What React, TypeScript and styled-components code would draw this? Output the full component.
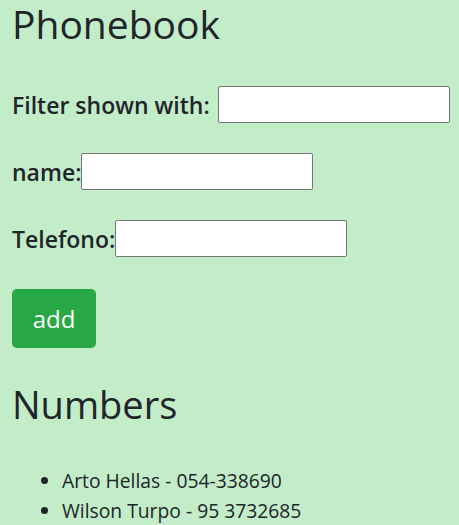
import React from 'react';
import styled, { createGlobalStyle } from 'styled-components';

const GlobalStyle = createGlobalStyle`
  html, body {
    margin: 0;
    padding: 0;
    background: #c3ecc9;
  }
  body {
    font-family: 'Open Sans', 'Noto Sans', sans-serif;
    color: #212529;
  }
`;

const PERSONS = [
  { name: 'Arto Hellas', number: '054-338690' },
  { name: 'Wilson Turpo', number: '95 3732685' },
];

const App: React.FC = () => {
  return (
    <Page>
      <GlobalStyle />
      <Title>Phonebook</Title>
      <Row $top={38}>
        <Label>Filter shown with:</Label>
        <Spacer />
        <Input />
      </Row>
      <Form>
        <Row $top={30}>
          <Label>name:</Label>
          <Input />
        </Row>
        <Row $top={30}>
          <Label>Telefono:</Label>
          <Input />
        </Row>
        <AddButton type="submit">add</AddButton>
      </Form>
      <Subtitle>Numbers</Subtitle>
      <List>
        {PERSONS.map((p) => (
          <Item key={p.name}>
            {p.name} - {p.number}
          </Item>
        ))}
      </List>
    </Page>
  );
};

export default App;

const Page = styled.div`
  padding: 0 12px;
  display: flex;
  flex-direction: column;
  align-items: flex-start;
`;

const Title = styled.h1`
  margin: 0;
  font-size: 39px;
  font-weight: 400;
  line-height: 48px;
`;

const Form = styled.form`
  display: flex;
  flex-direction: column;
  align-items: flex-start;
`;

const Row = styled.div<{ $top: number }>`
  margin-top: ${(p) => p.$top}px;
  display: flex;
  align-items: center;
  height: 37px;
  white-space: nowrap;

  & > * {
    flex: none;
  }
`;

const Label = styled.span`
  font-size: 23px;
  font-weight: 600;
`;

const Spacer = styled.span`
  width: 8px;
`;

const Input = styled.input`
  box-sizing: border-box;
  width: 232px;
  height: 37px;
  margin: 0;
  padding: 1px 2px;
  border: 1px solid #767676;
  border-radius: 2px;
  background: #fff;
  font-size: 18px;
`;

const AddButton = styled.button`
  margin-top: 32px;
  width: 84px;
  height: 59px;
  border: none;
  border-radius: 5px;
  background: #28a745;
  color: #fff;
  font-family: 'Open Sans', 'Noto Sans', sans-serif;
  font-size: 24px;
  cursor: pointer;
`;

const Subtitle = styled.h2`
  margin: 34px 0 0;
  font-size: 38px;
  font-weight: 400;
  line-height: 44px;
`;

const List = styled.ul`
  margin: 40px 0 0;
  padding-left: 50px;
  font-size: 19.3px;
  line-height: 30px;
`;

const Item = styled.li``;
